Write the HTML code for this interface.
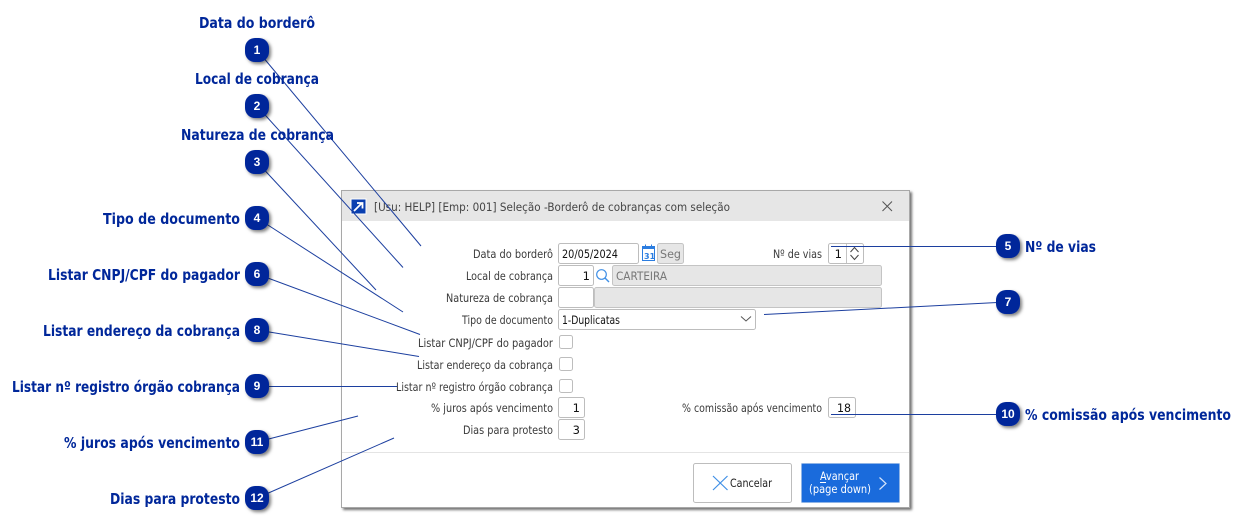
<!DOCTYPE html>
<html><head><meta charset="utf-8"><title>Borderô</title>
<style>
html,body{margin:0;padding:0;background:#fff;width:1247px;height:525px;overflow:hidden}
svg{display:block}
.h text{font:bold 15px "DejaVu Sans","Liberation Sans",sans-serif;fill:#00279a}
.n text{font:bold 12px "Liberation Sans","DejaVu Sans",sans-serif;fill:#fff;text-anchor:middle}
.f text{font:11.5px "DejaVu Sans","Liberation Sans",sans-serif;fill:#3a3a3a}
.v text{font:11.5px "DejaVu Sans","Liberation Sans",sans-serif;fill:#111}
.i rect{fill:#fff;stroke:#bdbdbd;stroke-width:1}
.g rect{fill:#e6e6e6;stroke:#c4c4c4;stroke-width:1}
.l line{stroke:#1c3f9f;stroke-width:1}
</style></head><body>
<svg width="1247" height="525" viewBox="0 0 1247 525" xmlns="http://www.w3.org/2000/svg">
<defs>
<filter id="s" x="-20%" y="-20%" width="150%" height="150%"><feDropShadow dx="2" dy="2" stdDeviation="1.2" flood-color="#000" flood-opacity=".55"/></filter>
<filter id="b" x="-30%" y="-30%" width="170%" height="170%"><feDropShadow dx="2" dy="2" stdDeviation="1.5" flood-color="#000" flood-opacity=".5"/></filter>
</defs>

<!-- dialog -->
<rect x="341.5" y="190.5" width="568" height="317" fill="#fff" stroke="#a8a8a8" filter="url(#s)"/>
<rect x="342" y="191" width="567" height="30" fill="#e6e6e6"/>
<rect x="342" y="452" width="567" height="1" fill="#e4e4e4"/>
<rect x="351" y="199" width="15" height="15" fill="#0a3fb0" stroke="#fff" stroke-width="1"/>
<path d="M354 211 L362 203 M357 203 H362.5 V208.5" fill="none" stroke="#fff" stroke-width="1.8"/>
<g class="f"><text x="374" y="211" textLength="356" lengthAdjust="spacingAndGlyphs" style="fill:#444">[Usu: HELP] [Emp: 001] Seleção -Borderô de cobranças com seleção</text></g>
<path d="M882.5 201.5 L892 211 M892 201.5 L882.5 211" stroke="#555" stroke-width="1" fill="none"/>

<!-- inputs -->
<g class="i">
<rect x="558.5" y="243.5" width="80" height="20" rx="2"/>
<rect x="558.5" y="265.5" width="35" height="20" rx="2"/>
<rect x="558.5" y="287.5" width="35" height="20" rx="2"/>
<rect x="558.5" y="309.5" width="197" height="20" rx="2"/>
<rect x="559.5" y="335.5" width="13" height="13" rx="2"/>
<rect x="559.5" y="357.5" width="13" height="13" rx="2"/>
<rect x="559.5" y="379.5" width="13" height="13" rx="2"/>
<rect x="558.5" y="397.5" width="26" height="20" rx="2"/>
<rect x="558.5" y="419.5" width="26" height="20" rx="2"/>
<rect x="828.5" y="243.5" width="35" height="20" rx="2"/>
<rect x="828.5" y="397.5" width="27" height="20" rx="2"/>
<rect x="693.5" y="463.5" width="98" height="39" rx="2"/>
</g>
<g class="g">
<rect x="612.5" y="265.5" width="269" height="20" rx="2"/>
<rect x="594.5" y="287.5" width="287" height="20" rx="2"/>
<rect x="657.5" y="243.5" width="26" height="20" rx="2"/>
</g>
<line x1="846.5" y1="244" x2="846.5" y2="263" stroke="#c4c4c4"/>
<path d="M850.5 252 L854.5 247.5 L858.5 252 M850.5 255 L854.5 259.5 L858.5 255" fill="none" stroke="#444"/>
<path d="M741 316.5 L746 321 L751 316.5" fill="none" stroke="#555"/>

<!-- calendar -->
<rect x="642.5" y="246.5" width="12" height="14" fill="#fff" stroke="#2b7de0"/>
<rect x="642" y="246" width="13" height="3" fill="#2b7de0"/>
<path d="M645.5 244.5 v3 M651.5 244.5 v3" stroke="#2b7de0"/>
<text x="644" y="259" font-family="DejaVu Sans" font-size="8" font-weight="bold" fill="#2b7de0">31</text>
<!-- search -->
<circle cx="601.5" cy="274.5" r="4.8" fill="none" stroke="#3f8fe6" stroke-width="1.2"/>
<path d="M605 278 L609 282" stroke="#3f8fe6" stroke-width="1.4"/>

<!-- form labels -->
<g class="f">
<text x="473" y="258" textLength="80" lengthAdjust="spacingAndGlyphs">Data do borderô</text>
<text x="466" y="280" textLength="87" lengthAdjust="spacingAndGlyphs">Local de cobrança</text>
<text x="446" y="302" textLength="107" lengthAdjust="spacingAndGlyphs">Natureza de cobrança</text>
<text x="462" y="324" textLength="91" lengthAdjust="spacingAndGlyphs">Tipo de documento</text>
<text x="418" y="347" textLength="135" lengthAdjust="spacingAndGlyphs">Listar CNPJ/CPF do pagador</text>
<text x="417" y="369" textLength="136" lengthAdjust="spacingAndGlyphs">Listar endereço da cobrança</text>
<text x="396" y="391" textLength="157" lengthAdjust="spacingAndGlyphs">Listar nº registro órgão cobrança</text>
<text x="431" y="412" textLength="122" lengthAdjust="spacingAndGlyphs">% juros após vencimento</text>
<text x="463" y="434" textLength="90" lengthAdjust="spacingAndGlyphs">Dias para protesto</text>
<text x="773" y="258" textLength="49" lengthAdjust="spacingAndGlyphs">Nº de vias</text>
<text x="682" y="412" textLength="140" lengthAdjust="spacingAndGlyphs">% comissão após vencimento</text>
<text x="660" y="258" textLength="21" lengthAdjust="spacingAndGlyphs" style="fill:#777">Seg</text>
<text x="616" y="280" textLength="51" lengthAdjust="spacingAndGlyphs" style="fill:#777">CARTEIRA</text>
<text x="730" y="487" textLength="42" lengthAdjust="spacingAndGlyphs" style="fill:#222">Cancelar</text>
</g>
<g class="v">
<text x="562" y="258" textLength="56" lengthAdjust="spacingAndGlyphs">20/05/2024</text>
<text x="590" y="280" text-anchor="end">1</text>
<text x="562" y="324" textLength="58" lengthAdjust="spacingAndGlyphs">1-Duplicatas</text>
<text x="580" y="412" text-anchor="end">1</text>
<text x="580" y="434" text-anchor="end">3</text>
<text x="842" y="258" text-anchor="end">1</text>
<text x="851" y="412" text-anchor="end" textLength="14" lengthAdjust="spacingAndGlyphs">18</text>
</g>

<!-- buttons -->
<path d="M713 476 L727.5 490 M727.5 476 L713 490" stroke="#3f8fe6" stroke-width="1.2" fill="none"/>
<rect x="801.5" y="463.5" width="98" height="39" rx="1" fill="#1a6bdc" stroke="#8fb4e6"/>
<text x="820" y="480" font-family="DejaVu Sans" font-size="11.5" fill="#fff" textLength="39" lengthAdjust="spacingAndGlyphs">Avançar</text>
<rect x="820" y="482" width="6" height="1" fill="#fff"/>
<text x="809" y="493" font-family="DejaVu Sans" font-size="11.5" fill="#fff" textLength="62" lengthAdjust="spacingAndGlyphs">(page down)</text>
<path d="M879.5 477.5 L886 483.5 L879.5 489.5" fill="none" stroke="#d4e4fa" stroke-width="1.2"/>

<!-- callout lines -->
<g class="l">
<line x1="257" y1="50" x2="421" y2="246"/>
<line x1="257" y1="106" x2="403" y2="267.5"/>
<line x1="257" y1="162" x2="376" y2="290"/>
<line x1="257" y1="218" x2="403" y2="312"/>
<line x1="257" y1="274" x2="420" y2="334.5"/>
<line x1="257" y1="330" x2="419" y2="356.5"/>
<line x1="257" y1="386.5" x2="397" y2="386.5"/>
<line x1="257" y1="442" x2="358" y2="416"/>
<line x1="257" y1="498" x2="394" y2="438"/>
<line x1="1007" y1="246.5" x2="831" y2="246.5"/>
<line x1="1007" y1="302" x2="764" y2="314.5"/>
<line x1="1007" y1="414.5" x2="831" y2="414.5"/>
</g>

<!-- headings -->
<g class="h">
<text x="199" y="28" textLength="116" lengthAdjust="spacingAndGlyphs">Data do borderô</text>
<text x="195" y="84" textLength="124" lengthAdjust="spacingAndGlyphs">Local de cobrança</text>
<text x="181" y="140" textLength="153" lengthAdjust="spacingAndGlyphs">Natureza de cobrança</text>
<text x="103" y="224" textLength="137" lengthAdjust="spacingAndGlyphs">Tipo de documento</text>
<text x="48" y="280" textLength="192" lengthAdjust="spacingAndGlyphs">Listar CNPJ/CPF do pagador</text>
<text x="43" y="336" textLength="197" lengthAdjust="spacingAndGlyphs">Listar endereço da cobrança</text>
<text x="12" y="392" textLength="228" lengthAdjust="spacingAndGlyphs">Listar nº registro órgão cobrança</text>
<text x="64" y="448" textLength="176" lengthAdjust="spacingAndGlyphs">% juros após vencimento</text>
<text x="110" y="504" textLength="130" lengthAdjust="spacingAndGlyphs">Dias para protesto</text>
<text x="1025" y="252" textLength="71" lengthAdjust="spacingAndGlyphs">Nº de vias</text>
<text x="1025" y="420" textLength="206" lengthAdjust="spacingAndGlyphs">% comissão após vencimento</text>
</g>

<!-- bubbles -->
<g fill="#00279a" filter="url(#b)">
<rect x="245" y="38" width="24" height="24" rx="10"/>
<rect x="245" y="94" width="24" height="24" rx="10"/>
<rect x="245" y="150" width="24" height="24" rx="10"/>
<rect x="245" y="206" width="24" height="24" rx="10"/>
<rect x="245" y="262" width="24" height="24" rx="10"/>
<rect x="245" y="318" width="24" height="24" rx="10"/>
<rect x="245" y="374" width="24" height="24" rx="10"/>
<rect x="245" y="430" width="24" height="24" rx="10"/>
<rect x="245" y="486" width="24" height="24" rx="10"/>
<rect x="996" y="234" width="24" height="24" rx="10"/>
<rect x="996" y="290" width="24" height="24" rx="10"/>
<rect x="996" y="402" width="24" height="24" rx="10"/>
</g>
<g class="n">
<text x="257" y="54">1</text>
<text x="257" y="110">2</text>
<text x="257" y="166">3</text>
<text x="257" y="222">4</text>
<text x="257" y="278">6</text>
<text x="257" y="334">8</text>
<text x="257" y="390">9</text>
<text x="257" y="446">11</text>
<text x="257" y="502">12</text>
<text x="1008" y="250">5</text>
<text x="1008" y="306">7</text>
<text x="1008" y="418">10</text>
</g>
</svg>
</body></html>
